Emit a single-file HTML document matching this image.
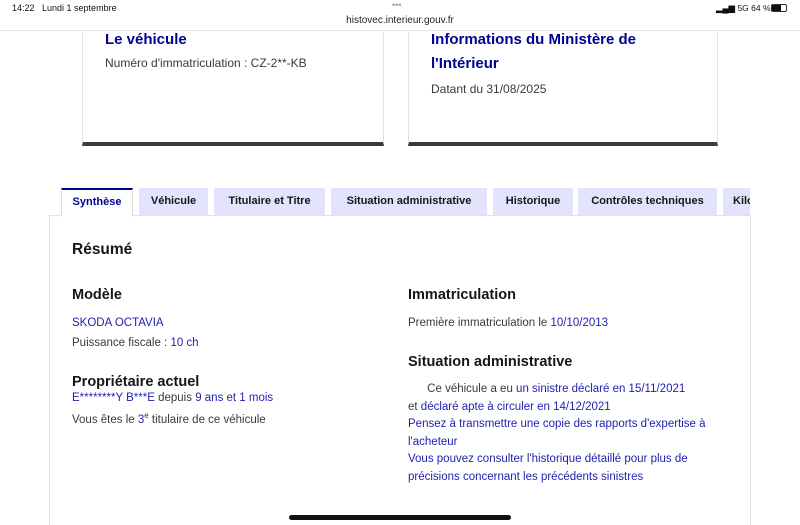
<!DOCTYPE html>
<html><head><meta charset="utf-8"><style>
*{margin:0;padding:0;box-sizing:border-box}
html,body{width:800px;height:525px;overflow:hidden}
body{background:#fff;font-family:"Liberation Sans","DejaVu Sans",sans-serif;color:#3a3a3a;position:relative}
.abs{position:absolute}
.bar{left:0;top:0;width:800px;height:31px;background:#fff;border-bottom:1px solid #e6e6e6}
.card{background:#fff;border:1px solid #e2e2e2;border-top:none;border-bottom:4px solid #3a3a3a}
h3{color:#000091;font-size:15px;font-weight:bold;line-height:24px}
.s{font-size:12px;color:#3a3a3a}
.tab{top:188px;height:27px;background:#e3e3fd;font-size:11px;font-weight:bold;color:#161616;text-align:center;line-height:27px;white-space:nowrap;overflow:hidden}
.tab.act{background:#fff;color:#000091;border-top:2px solid #000091;border-left:1px solid #ddd;border-right:1px solid #ddd;height:29px;line-height:25px;z-index:2}
.panel{left:49px;top:215px;width:702px;height:320px;border:1px solid #e2e2e2;background:#fff}
.h{font-size:14.5px;font-weight:bold;color:#161616}
.t{font-size:11.5px;color:#3a3a3a;line-height:20px}
.b{color:#1f1fb0}
</style></head><body>
<div class="abs bar">
<div class="abs" style="left:12px;top:3px;font-size:9px;color:#111">14:22&nbsp;&nbsp;&nbsp;Lundi 1 septembre</div>
<div class="abs" style="left:392px;top:0px;font-size:9px;color:#999">•••</div>
<div class="abs" style="left:0;width:800px;top:15px;text-align:center;font-size:10px;color:#222">histovec.interieur.gouv.fr</div>
<div class="abs" style="left:716px;top:3px;font-size:8.5px;color:#111;white-space:nowrap">▂▄▆ 5G 64 %</div>
<div class="abs" style="left:771px;top:4px;width:16px;height:8px;border:1px solid #333;border-radius:2px"><div style="width:9px;height:6px;background:#111"></div></div>
</div>
<div class="abs card" style="left:82px;top:31px;width:302px;height:115px"></div>
<div class="abs card" style="left:408px;top:31px;width:310px;height:115px"></div>
<div class="abs" style="left:105px;top:28px"><h3>Le véhicule</h3><div class="s" style="margin-top:4px">Numéro d'immatriculation : CZ-2**-KB</div></div>
<div class="abs" style="left:431px;top:28px"><h3>Informations du Ministère de<br>l'Intérieur</h3><div class="s" style="margin-top:6px">Datant du 31/08/2025</div></div>
<div class="abs panel"></div>
<div class="abs tab act" style="left:61px;width:72px">Synthèse</div>
<div class="abs tab" style="left:139px;width:69px">Véhicule</div>
<div class="abs tab" style="left:214px;width:111px">Titulaire et Titre</div>
<div class="abs tab" style="left:331px;width:156px">Situation administrative</div>
<div class="abs tab" style="left:493px;width:80px">Historique</div>
<div class="abs tab" style="left:578px;width:139px">Contrôles techniques</div>
<div class="abs tab" style="left:723px;width:27px;text-align:left;padding-left:10px">Kilo</div>
<div class="abs h" style="left:72px;top:241px;font-size:15.5px">Résumé</div>
<div class="abs h" style="left:72px;top:287px">Modèle</div>
<div class="abs t" style="left:72px;top:313px"><span class="b">SKODA OCTAVIA</span><br>Puissance fiscale : <span class="b">10 ch</span></div>
<div class="abs h" style="left:72px;top:374px">Propriétaire actuel</div>
<div class="abs t" style="left:72px;top:389px;line-height:18px"><span class="b">E********Y B***E</span> depuis <span class="b">9 ans et 1 mois</span><br>Vous êtes le <span class="b">3<sup style="font-size:8px">e</sup></span> titulaire de ce véhicule</div>
<div class="abs h" style="left:408px;top:287px">Immatriculation</div>
<div class="abs t" style="left:408px;top:313px">Première immatriculation le <span class="b">10/10/2013</span></div>
<div class="abs h" style="left:408px;top:354px">Situation administrative</div>
<div class="abs t" style="left:408px;top:381px;line-height:17.5px">&nbsp;&nbsp;&nbsp;&nbsp;&nbsp;&nbsp;Ce véhicule a eu <span class="b">un sinistre déclaré en 15/11/2021</span><br>et <span class="b">déclaré apte à circuler en 14/12/2021</span><br><span class="b">Pensez à transmettre une copie des rapports d'expertise à<br>l'acheteur<br>Vous pouvez consulter l'historique détaillé pour plus de<br>précisions concernant les précédents sinistres</span></div>
<div class="abs" style="left:289px;top:515px;width:222px;height:5px;border-radius:3px;background:#111"></div>
</body></html>
